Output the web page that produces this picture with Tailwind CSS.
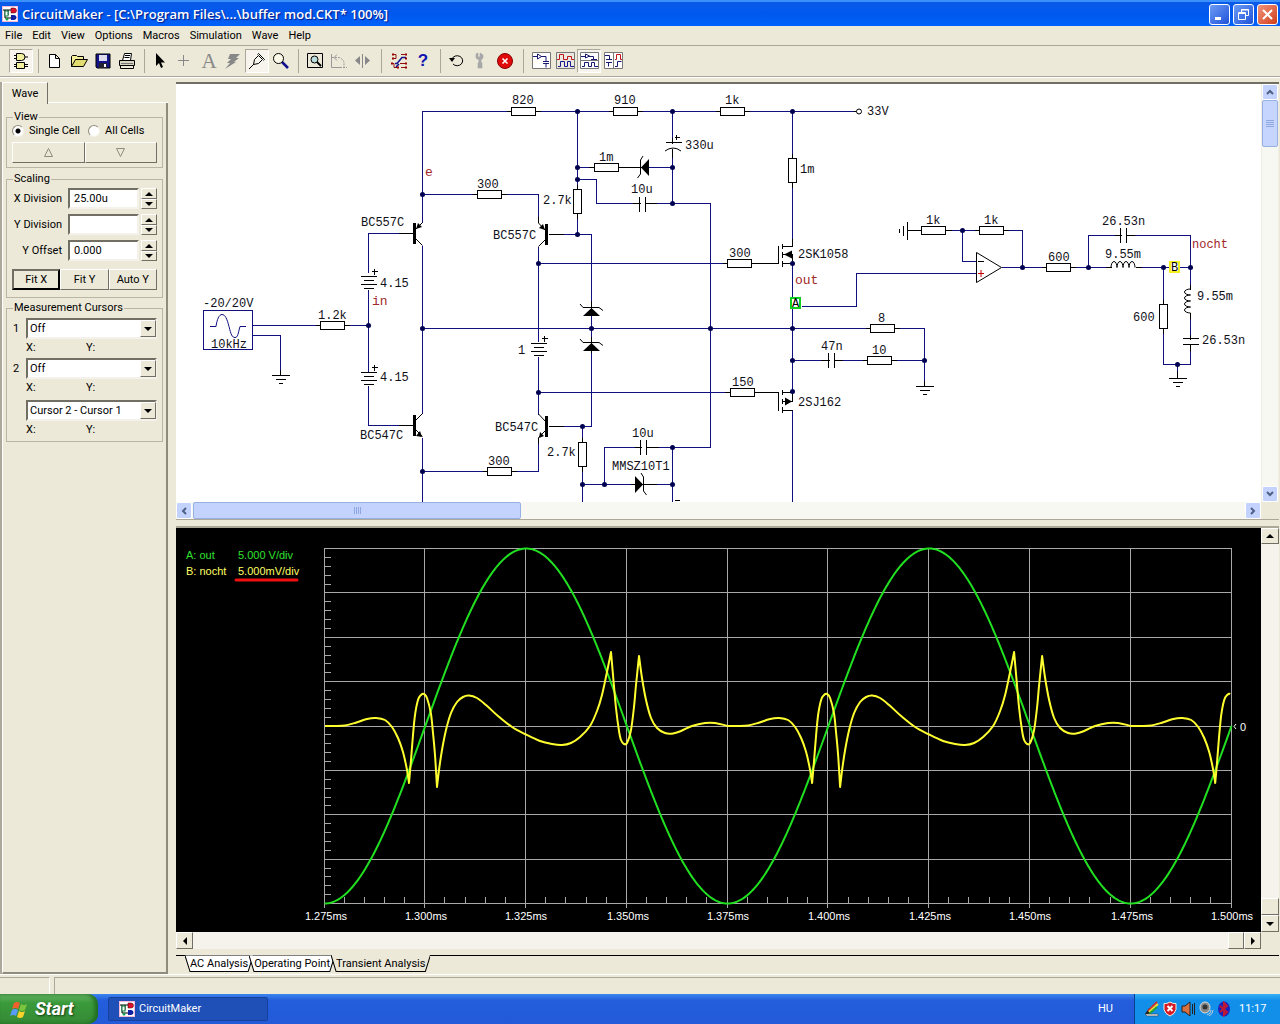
<!DOCTYPE html>
<html lang="en">

<head>
    <meta charset="UTF-8">
    <meta name="viewport" content="width=device-width,initial-scale=1.0">
    <script src="https://cdn.jsdelivr.net/npm/@tailwindcss/browser@4"></script>
    <title>CircuitMaker</title>
</head>

<body class="bg-[#ece9d8] font-[Roboto,'Liberation_Sans',sans-serif] text-[11px] leading-[14px] text-black">
    <!-- Shared symbols -->
    <svg class="hidden">
        <symbol id="app-icon" viewBox="0 0 16 16">
            <rect x=".5" y=".5" width="15" height="15" fill="#fff" stroke="#f7b8d8" />
            <path d="M1 4h9M3 4v8h7M6 4v5" fill="none" stroke="#000" />
            <rect x="3" y="5" width="3" height="5" fill="#fff" stroke="#087a3a" />
            <path d="M9 2h3a2.500 2.500 0 0 1 0 5H9z" fill="#e01030" stroke="#400" stroke-width=".5" />
            <path d="M9 9h3a2.500 2.500 0 0 1 0 5H9z" fill="#1020a0" />
            <circle cx="5" cy="13" r="1.500" fill="#18a050" />
        </symbol>
        <symbol id="up" viewBox="0 0 8 4"><path d="M4 0l4 4H0z" /></symbol>
        <symbol id="down" viewBox="0 0 8 4"><path d="M0 0h8L4 4z" /></symbol>
        <symbol id="left" viewBox="0 0 4 8"><path d="M4 0v8L0 4z" /></symbol>
        <symbol id="right" viewBox="0 0 4 8"><path d="M0 0v8l4-4z" /></symbol>
    </svg>

    <div class="flex min-h-screen flex-col">
        <!-- Title bar -->
        <header
            class="flex h-[26px] items-center bg-linear-to-b from-[#0a5ae8] via-[#0058ee] to-[#0062fb] border-t-2 border-[#3c90fb] px-[2px]">
            <svg class="size-4"><use href="#app-icon" /></svg>
            <h1
                class="ml-1 flex-1 font-['Open_Sans',sans-serif] text-[13px] font-semibold text-white [text-shadow:1px_1px_1px_#0a1883]">
                CircuitMaker - [C:\Program Files\...\buffer mod.CKT* 100%]</h1>
            <div class="flex gap-[3px]">
                <button aria-label="Minimize"
                    class="flex size-[21px] items-center justify-center rounded-[3px] border border-white bg-linear-to-br from-[#6e9bf5] to-[#1f50d8]">
                    <svg class="size-[15px]" viewBox="0 0 15 15"><path d="M3 10h6v3H3z" fill="#fff" /></svg></button>
                <button aria-label="Restore"
                    class="flex size-[21px] items-center justify-center rounded-[3px] border border-white bg-linear-to-br from-[#6e9bf5] to-[#1f50d8]">
                    <svg class="size-[15px]" viewBox="0 0 15 15" fill="none" stroke="#fff">
                        <path d="M5.500 5V2.500h7v6H10M5 3h8" /><path d="M2.500 5.500h7v7h-7zM2 6.500h8" /></svg></button>
                <button aria-label="Close"
                    class="flex size-[21px] items-center justify-center rounded-[3px] border border-white bg-linear-to-br from-[#f0937a] to-[#d03a12]">
                    <svg class="size-[15px]" viewBox="0 0 15 15"><path d="M3 3l9 9M12 3l-9 9" stroke="#fff"
                            stroke-width="2" /></svg></button>
            </div>
        </header>

        <!-- Menu -->
        <nav class="flex h-[19px] items-center gap-[10px] pl-[5px]">
            <a href="#">File</a>
            <a href="#">Edit</a>
            <a href="#">View</a>
            <a href="#">Options</a>
            <a href="#">Macros</a>
            <a href="#">Simulation</a>
            <a href="#">Wave</a>
            <a href="#">Help</a>
        </nav>

        <!-- Toolbar -->
        <div class="flex h-[32px] items-center border-t border-b border-t-[#aca899] border-b-[#aca899] pl-[9px]">
            <button aria-label="Devices"
                class="flex size-6 items-center justify-center border border-t-[#aca899] border-l-[#aca899] border-r-white border-b-white bg-[#f6f4ec]">
                <svg class="size-[18px]" viewBox="0 0 18 18" stroke="#000" fill="#f3f0a0">
                    <path d="M2 3.500h3M2 6.500h3M12 5h4M2 12.500h3M2 14.500h3M12 12.500h4M12 14.500h4" />
                    <path d="M4.500 1.500h5a3.500 3.500 0 0 1 0 7h-5zM4.500 10.500h8v6h-8z" />
                </svg></button>
            <div class="flex w-2.5 justify-center"><i class="h-6 border-l border-[#aca899]"></i></div>
            <button aria-label="New" class="flex size-6 items-center justify-center">
                <svg class="size-[18px]" viewBox="0 0 18 18"><path d="M3.500 2.500h6l4 4v9h-10zM9.500 2.500v4h4" fill="#fff"
                        stroke="#000" /></svg></button>
            <button aria-label="Open" class="flex size-6 items-center justify-center">
                <svg class="size-[18px]" viewBox="0 0 18 18" stroke="#000">
                    <path d="M1.500 14.500v-10l1-1h4l1 1h6v3" fill="#f5ef9a" />
                    <path d="M1.500 14.500l4-7h12l-4 7z" fill="#e2dc70" /></svg></button>
            <button aria-label="Save" class="flex size-6 items-center justify-center">
                <svg class="size-[18px]" viewBox="0 0 18 18">
                    <path d="M2 2h14v14H3l-1-1z" fill="#14148a" stroke="#000" />
                    <path d="M5 3h8v6H5z" fill="#dde" /><path d="M5 11h8v5H5z" fill="#223" />
                    <path d="M10 12h2v3h-2z" fill="#fff" /></svg></button>
            <button aria-label="Print" class="flex size-6 items-center justify-center">
                <svg class="size-[18px]" viewBox="0 0 18 18" stroke="#000">
                    <path d="M4.500 8.500l2-7h7l-1 7z" fill="#fff" /><path d="M7 3.500h5M6.500 5.500h5" />
                    <path d="M1.500 8.500h15v5h-15z" fill="#d8d5c4" /><path d="M2.500 13.500h13v3h-13z" fill="#ece9d8" />
                    <path d="M3 11.500h12" stroke="#777" /></svg></button>
            <div class="flex w-2.5 justify-center"><i class="h-6 border-l border-[#aca899]"></i></div>
            <button aria-label="Arrow tool" class="flex size-6 items-center justify-center">
                <svg class="size-[18px]" viewBox="0 0 18 18"><path d="M4 1v13l3-3 2 5 2-1-2-4.500h4z" /></svg></button>
            <button aria-label="Wire tool" class="flex size-6 items-center justify-center">
                <svg class="size-[18px]" viewBox="0 0 18 18"><path d="M7.500 3v11M2 8.500h11" stroke="#888" /></svg></button>
            <button aria-label="Text tool"
                class="flex size-6 items-center justify-center font-['Liberation_Serif',serif] text-[21px] text-[#888]">A</button>
            <button aria-label="Delete tool" class="flex size-6 items-center justify-center">
                <svg class="size-[18px]" viewBox="0 0 18 18"><path d="M6 2h10l-4 4h3l-5 4h2L1 17l5-6H3l4-4H4z"
                        fill="#888" /></svg></button>
            <button aria-label="Probe tool"
                class="flex size-6 items-center justify-center border border-t-[#aca899] border-l-[#aca899] border-r-white border-b-white bg-[#f6f4ec]">
                <svg class="size-[18px]" viewBox="0 0 18 18" fill="none" stroke="#000">
                    <path d="M1 17l5-5M5.500 12.500l1-5 4-4 4 4-4 4zM9.500 2.500l1-1 6 6-1 1" /></svg></button>
            <button aria-label="Zoom tool" class="flex size-6 items-center justify-center">
                <svg class="size-[18px]" viewBox="0 0 18 18"><path d="M10 10l6 6" stroke="#101090"
                        stroke-width="2.500" /><circle cx="6.500" cy="6.500" r="5" fill="#fbfae8"
                        stroke="#000" /></svg></button>
            <div class="flex w-2.5 justify-center"><i class="h-6 border-l border-[#aca899]"></i></div>
            <button aria-label="Fit view" class="flex size-6 items-center justify-center">
                <svg class="size-[18px]" viewBox="0 0 18 18" fill="none" stroke="#000">
                    <path d="M1.500 1.500h15v14h-15z" /><circle cx="8.500" cy="7.500" r="3.500" fill="#bdd" />
                    <path d="M11 10l4 4" stroke-width="2" /></svg></button>
            <button aria-label="Rotate" class="flex size-6 items-center justify-center">
                <svg class="size-[18px]" viewBox="0 0 18 18" fill="none" stroke="#999">
                    <path d="M1.500 2v13.500H10" /><path d="M10 15.500h7M2 5.500h6a6 6 0 0 1 6 6v4" stroke-dasharray="2 1" />
                    <path d="M7 2.500l-3 3 3 3" /></svg></button>
            <button aria-label="Mirror" class="flex size-6 items-center justify-center">
                <svg class="size-[18px]" viewBox="0 0 18 18" fill="#888"><path
                        d="M8 2h1v14H8zM6 4v9L1 8.500zM11 4v9l5-4.500z" /></svg></button>
            <div class="flex w-3 justify-center"><i class="h-6 border-l border-[#aca899]"></i></div>
            <button aria-label="Digital analog" class="flex size-6 items-center justify-center">
                <svg class="size-[18px]" viewBox="0 0 18 18" fill="none">
                    <path d="M3 2.500h3v4H3M1 11.500h3v4h4M11 2.500h5M10 11.500h5M11 15.500h5" stroke="#901010" />
                    <path d="M5 11.500h2l5-6h4M6 15l3-3" stroke="#101090" stroke-width="1.500" />
                    <path d="M2 1.500h2v2H2zM2 5.500h2v2H2zM1 10.500h2v2H1zM15 1.500h2v2h-2zM15 5.500h2v2h-2zM15 10.500h2v2h-2zM15 14.500h2v2h-2zM7 14.500h2v2H7z"
                        fill="#900" /></svg></button>
            <button aria-label="Help"
                class="flex size-6 items-center justify-center font-['Liberation_Sans',sans-serif] text-[17px] font-bold text-[#1414b0]">?</button>
            <div class="flex w-2.5 justify-center"><i class="h-6 border-l border-[#aca899]"></i></div>
            <button aria-label="Reset" class="flex size-6 items-center justify-center">
                <svg class="size-[18px]" viewBox="0 0 18 18" fill="none" stroke="#000">
                    <path d="M4 7a5.500 5 0 1 1 1 5" /><path d="M1 6h6l-3 4z" fill="#000" stroke="none" /></svg></button>
            <button aria-label="Setup" class="flex size-6 items-center justify-center">
                <svg class="size-[18px]" viewBox="0 0 18 18"><path
                        d="M4 2l2-1v4h2V1l3 2v3L9 8v2l1 1v5H6v-5l1-1V8L4 6z" fill="#aaa" stroke="#999"
                        stroke-width=".5" /></svg></button>
            <button aria-label="Stop" class="flex size-6 items-center justify-center">
                <svg class="size-[18px]" viewBox="0 0 18 18"><circle cx="9" cy="9" r="7.500" fill="#e00a0a"
                        stroke="#800" /><path d="M6.500 6.500l5 5M11.500 6.500l-5 5" stroke="#fff"
                        stroke-width="1.600" /></svg></button>
            <div class="flex w-3 justify-center"><i class="h-6 border-l border-[#aca899]"></i></div>
            <button aria-label="Schematic" class="flex size-6 items-center justify-center">
                <svg class="size-5" viewBox="-1 0 20 20" fill="none">
                    <path d="M.5 1.500h18v16H.5z" fill="#fff" stroke="#777" />
                    <path d="M1 5.500h4M5.500 3v5l4-2.500zM9 5.500h5v5M11 10.500h6M11 12.500h6M14 12.500v4" stroke="#1a1a70" />
                </svg></button>
            <button aria-label="Waveforms" class="flex size-6 items-center justify-center">
                <svg class="size-5" viewBox="-1 0 20 20" fill="none">
                    <path d="M.5 1.500h18v16H.5z" fill="#ece9e0" stroke="#777" />
                    <path d="M1 8.500h2.500v-5h4v5h4v-3h4v3H18" stroke="#c01818" />
                    <path d="M2 15.500h2.500v-5h4v5h3v-5h3v5H18" stroke="#1a1a90" /></svg></button>
            <button aria-label="Split horizontal"
                class="flex size-6 items-center justify-center border border-t-[#aca899] border-l-[#aca899] border-r-white border-b-white bg-[#f6f4ec]">
                <svg class="size-5" viewBox="-1 0 20 20" fill="none">
                    <path d="M.5 1.500h18v16H.5zM1 9.500h17" fill="#fff" stroke="#777" />
                    <path d="M1 5.500h4M5.500 3v4l4-2zM9 5.500h4.500v3M11 8.500h6M2 15.500h2.500v-4h4v4h3v-4h3v4H18"
                        stroke="#1a1a70" /></svg></button>
            <button aria-label="Split vertical" class="flex size-6 items-center justify-center">
                <svg class="size-5" viewBox="-1 0 20 20" fill="none">
                    <path d="M.5 1.500h18v16H.5zM9.500 2v15" fill="#fff" stroke="#777" />
                    <path d="M1 4.500h4.500v4M2 8.500h6M2 11.500h6M4.500 11.500v4M11 15.500h2.500v-5h4" stroke="#1a1a70" />
                    <path d="M11 8.500h1.500v-5h4v5H18" stroke="#c01818" /></svg></button>
        </div>

        <main class="flex flex-1 gap-2 border-t border-white pt-1 pr-px">
            <!-- Side panel -->
            <aside class="flex w-[168px] flex-col border-l-2 border-[#aca899]">
                <div class="flex">
                    <button
                        class="-mb-px h-[22px] w-[46px] border border-t-white border-r-[#716f64] border-b-0 border-l-white bg-[#ece9d8]">Wave</button>
                    <span class="flex-1 border-b border-white"></span>
                </div>
                <form class="flex-1 border-r-2 border-b-2 border-[#8f8c7d] border-l border-l-white px-[3px] pt-[7px]">
                    <fieldset class="mb-[4px] border border-[#b9b6a5] px-[5px] pb-1">
                        <legend class="ml-px px-px">View</legend>
                        <div class="flex gap-2">
                            <label class="flex items-center gap-[5px]"><input type="radio" name="cell" checked
                                    class="size-3 appearance-none rounded-full border border-[#8f8c7d] border-r-[#f4f2ea] border-b-[#f4f2ea] bg-white bg-[radial-gradient(circle,#000_2px,#fff_3px)]">Single
                                Cell</label>
                            <label class="flex items-center gap-[5px]"><input type="radio" name="cell"
                                    class="size-3 appearance-none rounded-full border border-[#8f8c7d] border-r-[#f4f2ea] border-b-[#f4f2ea] bg-white">All
                                Cells</label>
                        </div>
                        <div class="mt-1 grid grid-cols-2">
                            <button type="button" aria-label="Previous cell"
                                class="flex h-[21px] items-center justify-center border border-t-white border-r-[#716f64] border-b-[#716f64] border-l-white">
                                <svg class="size-[11px]" viewBox="0 0 11 11"><path d="M5.500 1.500l4 8h-8z" fill="none"
                                        stroke="#8f8c7d" /></svg></button>
                            <button type="button" aria-label="Next cell"
                                class="flex h-[21px] items-center justify-center border border-t-white border-r-[#716f64] border-b-[#716f64] border-l-white">
                                <svg class="size-[11px]" viewBox="0 0 11 11"><path d="M5.500 9.500l4-8h-8z" fill="none"
                                        stroke="#8f8c7d" /></svg></button>
                        </div>
                    </fieldset>

                    <fieldset class="mb-[3px] border border-[#b9b6a5] px-[5px] pb-[7px]">
                        <legend class="ml-px px-px">Scaling</legend>
                        <div class="mt-[2px] flex flex-col gap-[5px]">
                            <div class="flex items-center justify-end gap-[2px]">
                                <label for="xdiv" class="mr-1">X Division</label>
                                <input id="xdiv" value="25.00u"
                                    class="h-[21px] w-[71px] border-2 border-t-[#716f64] border-r-[#f4f2ea] border-b-[#f4f2ea] border-l-[#716f64] bg-white px-1">
                                <span class="flex w-4 flex-col">
                                    <button type="button" aria-label="X up"
                                        class="flex h-[11px] items-center justify-center border border-t-white border-r-[#716f64] border-b-[#716f64] border-l-white"><svg
                                            class="h-1 w-2"><use href="#up" /></svg></button>
                                    <button type="button" aria-label="X down"
                                        class="flex h-[10px] items-center justify-center border border-t-white border-r-[#716f64] border-b-[#716f64] border-l-white"><svg
                                            class="h-1 w-2"><use href="#down" /></svg></button>
                                </span>
                            </div>
                            <div class="flex items-center justify-end gap-[2px]">
                                <label for="ydiv" class="mr-1">Y Division</label>
                                <input id="ydiv" value=""
                                    class="h-[21px] w-[71px] border-2 border-t-[#716f64] border-r-[#f4f2ea] border-b-[#f4f2ea] border-l-[#716f64] bg-white px-1">
                                <span class="flex w-4 flex-col">
                                    <button type="button" aria-label="Y up"
                                        class="flex h-[11px] items-center justify-center border border-t-white border-r-[#716f64] border-b-[#716f64] border-l-white"><svg
                                            class="h-1 w-2"><use href="#up" /></svg></button>
                                    <button type="button" aria-label="Y down"
                                        class="flex h-[10px] items-center justify-center border border-t-white border-r-[#716f64] border-b-[#716f64] border-l-white"><svg
                                            class="h-1 w-2"><use href="#down" /></svg></button>
                                </span>
                            </div>
                            <div class="flex items-center justify-end gap-[2px]">
                                <label for="yoff" class="mr-1">Y Offset</label>
                                <input id="yoff" value="0.000"
                                    class="h-[21px] w-[71px] border-2 border-t-[#716f64] border-r-[#f4f2ea] border-b-[#f4f2ea] border-l-[#716f64] bg-white px-1">
                                <span class="flex w-4 flex-col">
                                    <button type="button" aria-label="Offset up"
                                        class="flex h-[11px] items-center justify-center border border-t-white border-r-[#716f64] border-b-[#716f64] border-l-white"><svg
                                            class="h-1 w-2"><use href="#up" /></svg></button>
                                    <button type="button" aria-label="Offset down"
                                        class="flex h-[10px] items-center justify-center border border-t-white border-r-[#716f64] border-b-[#716f64] border-l-white"><svg
                                            class="h-1 w-2"><use href="#down" /></svg></button>
                                </span>
                            </div>
                        </div>
                        <div class="mt-[8px] grid h-[21px] grid-cols-3">
                            <button type="button" class="border-2 border-black border-t-[#716f64] border-l-[#716f64]">Fit X</button>
                            <button type="button"
                                class="border border-t-white border-r-[#716f64] border-b-[#716f64] border-l-white">Fit Y</button>
                            <button type="button"
                                class="border border-t-white border-r-[#716f64] border-b-[#716f64] border-l-white">Auto Y</button>
                        </div>
                    </fieldset>

                    <fieldset class="border border-[#b9b6a5] px-[5px] pb-1">
                        <legend class="ml-px px-px">Measurement Cursors</legend>
                        <div class="mt-[3px] grid grid-cols-[14px_60px_1fr] items-center gap-y-[2px]">
                            <label for="c1" class="pl-px">1</label>
                            <div class="relative col-span-2">
                                <select id="c1"
                                    class="block h-[21px] w-full appearance-none border-2 border-t-[#716f64] border-r-[#f4f2ea] border-b-[#f4f2ea] border-l-[#716f64] bg-white px-[2px]">
                                    <option>Off</option>
                                </select>
                                <span
                                    class="pointer-events-none absolute top-[2px] right-[1px] flex h-[17px] w-4 items-center justify-center border border-t-white border-r-[#716f64] border-b-[#716f64] border-l-white bg-[#ece9d8]"><svg
                                        class="h-1 w-2"><use href="#down" /></svg></span>
                            </div>
                            <span class="col-start-2">X:</span><span>Y:</span>
                            <label for="c2" class="mt-px pl-px">2</label>
                            <div class="relative col-span-2 mt-px">
                                <select id="c2"
                                    class="block h-[21px] w-full appearance-none border-2 border-t-[#716f64] border-r-[#f4f2ea] border-b-[#f4f2ea] border-l-[#716f64] bg-white px-[2px]">
                                    <option>Off</option>
                                </select>
                                <span
                                    class="pointer-events-none absolute top-[2px] right-[1px] flex h-[17px] w-4 items-center justify-center border border-t-white border-r-[#716f64] border-b-[#716f64] border-l-white bg-[#ece9d8]"><svg
                                        class="h-1 w-2"><use href="#down" /></svg></span>
                            </div>
                            <span class="col-start-2">X:</span><span>Y:</span>
                            <div class="relative col-span-2 col-start-2 mt-[3px]">
                                <select aria-label="Cursor difference"
                                    class="block h-[21px] w-full appearance-none border-2 border-t-[#716f64] border-r-[#f4f2ea] border-b-[#f4f2ea] border-l-[#716f64] bg-white px-[2px]">
                                    <option>Cursor 2 - Cursor 1</option>
                                </select>
                                <span
                                    class="pointer-events-none absolute top-[2px] right-[1px] flex h-[17px] w-4 items-center justify-center border border-t-white border-r-[#716f64] border-b-[#716f64] border-l-white bg-[#ece9d8]"><svg
                                        class="h-1 w-2"><use href="#down" /></svg></span>
                            </div>
                            <span class="col-start-2">X:</span><span>Y:</span>
                        </div>
                    </fieldset>
                </form>
            </aside>

            <div class="flex min-w-0 flex-1 flex-col border-t-2 border-[#716f64]">
                <!-- Schematic -->
                <div class="flex">
                    <div class="min-w-0 flex-1 bg-white">
                        <svg class="block w-full" viewBox="176 84 1085 418"
                            font-family="'Liberation Mono','Courier New',monospace" font-size="12">
                            <g transform="translate(.5 .5)" fill="none" stroke="#101080" shape-rendering="crispEdges">
                                <!-- wires -->
                                <path d="M422 222V111H853M422 194H538V217M577 111V234M577 167H672M577 179H596V203H710V447H604V484M672 111V203M792 111V246" />
                                <path d="M368 272V233H398M368 289V372M368 385V425H398M252 325H368M252 335H280V372M422 245V413M422 437V502M422 471H538V441" />
                                <path d="M422 328H924V383M538 246V341M538 356V414M538 263H763M538 392H763M563 234H591V426H563M582 426V502M582 484H672M672 447V502" />
                                <path d="M792 263V391M792 410V502M801 306H856V273H976M792 360H924M910 230H1022V267M962 230V261H976M1001 267H1190M1088 267V235H1190V364H1163V267M1177 364V378" />
                                <path d="M203 310h49v39h-49z" />
                                <!-- component leads -->
                                <path stroke="#000" d="M506 111h34M608 111h34M715 111h34M472 194h34M588 167h60M577 184v34M792 153v34M632 203h24M672 137v20M398 233h15M398 425h15M315 325h34M482 471h34M548 234h15M548 426h15M582 437v34M634 447h24M630 484h26M722 263h56M724 392h54M865 328h34M820 360h22M862 360h34M907 230h44M974 230h34M1041 267h34M1114 235h20M1105 267h36M1163 299v34M1190 284v34M1190 334v16M853 111h4M280 369v6M924 380v6M1177 370v8M591 300v15M591 336v16" />
                            </g>
                            <!-- resistors -->
                            <g transform="translate(.5 .5)" fill="#fff" stroke="#000" shape-rendering="crispEdges">
                                <path d="M511 107h24v8h-24zM613 107h24v8h-24zM720 107h24v8h-24zM594 163h24v8h-24zM477 190h24v8h-24zM487 467h24v8h-24zM320 321h24v8h-24zM727 259h24v8h-24zM730 388h24v8h-24zM870 324h24v8h-24zM867 356h24v8h-24zM921 226h24v8h-24zM979 226h24v8h-24zM1046 263h24v8h-24z" />
                                <path d="M573 189h8v24h-8zM578 442h8v24h-8zM788 158h8v24h-8zM1159 304h8v24h-8z" />
                                <!-- gaps for capacitors, batteries and coils -->
                                <path stroke="none" d="M640 196h5v16h-5zM641 440h5v14h-5zM829 352h5v16h-5zM1121 227h5v16h-5zM1182 339h16v5h-16zM665 143h16v5h-16zM360 277h16v12h-16zM360 373h16v12h-16zM530 344h16v12h-16zM1111 266h24v3h-24zM1189 289h3v23h-3z" />
                            </g>
                            <g transform="translate(.5 .5)" fill="none" stroke="#000" shape-rendering="crispEdges">
                                <!-- capacitors -->
                                <path d="M639 196v15M645 196v15M640 439v15M646 439v15M828 352v15M834 352v15M1120 227v15M1126 227v15M1182 338h16M1182 344h16M665 142h16" />
                                <!-- batteries -->
                                <path d="M360 276h16M363 280h10M360 284h16M363 288h10M360 372h16M363 376h10M360 380h16M363 384h10M530 343h16M533 347h10M530 351h16M533 355h10" />
                                <path d="M371 271h6M374 268v6M371 367h6M374 364v6M541 338h6M544 335v6M674 137h5M676 134v5M674 500h5" />
                                <!-- grounds -->
                                <path d="M271 375h18M275 379h10M278 383h4M915 386h18M919 390h10M922 394h4M1168 378h18M1172 382h10M1175 386h4M907 221v18M903 225v10M899 228v4" />
                                <!-- mosfets -->
                                <path d="M778 245v18M782 243v5M782 251v6M782 260v6M782 246h10v-8M782 254h10v9h-10M778 392v18M782 389v5M782 398v5M782 406v6M782 392h10v9h-10M782 410h10" />
                            </g>
                            <g fill="none" stroke="#000">
                                <path d="M665 151q8-6 16 0" />
                                <path d="M976.500 252.500v30l25-15z" fill="#fff" />
                                <path d="M978 261.500h6" />
                                <path d="M978 273.500h6M981 270v7" stroke="#c00000" />
                                <path d="M1111 267.500a3 6 0 0 1 6 0a3 6 0 0 1 6 0a3 6 0 0 1 6 0a3 6 0 0 1 6 0" />
                                <path d="M1190.500 289a6 3 0 0 0 0 6a6 3 0 0 0 0 6a6 3 0 0 0 0 6a6 3 0 0 0 0 6" />
                                <path d="M210 326.500h6c1-7 3-12 6-12s5 4 7 12 3 11 6 11 3-4 5-11h6" stroke="#101080" />
                                <circle cx="859" cy="111.500" r="2.500" fill="#fff" />
                                <!-- transistor legs -->
                                <path d="M415 230l7.500-7.500M415 238l7.500 7.500M415 421l7.500-7.500M415 429l7.500 7.500M546 231l-7.500-8v-6M546 239l-7.500 7.500M546 422l-7.500-8M546 430l-7.500 7.500v6" />
                                <path d="M414.500 223v21M414.500 415v21M546.500 224v21M546.500 416v21" stroke-width="3" />
                                <!-- zener bars -->
                                <path d="M643 156l-2.500 4v14l-3 4M580 304l3 3.500h16l4 3M580 339l3 3.500h16l4 3M641 473l2.500 4v14l3 4" />
                            </g>
                            <!-- arrow heads -->
                            <path d="M416 229l2-6 4 4zM422 437l-6-1 4-5zM545 230l-6-2 4-4zM539 438l1-6 4 4zM649 159v17l-8-8.500zM635 476v17l8-8.500zM583 316h17l-8.500-8zM583 351h17l-8.500-8zM784 254.500l8-4v8zM792 401.500l-7-4v8z" />
                            <!-- junctions -->
                            <g fill="#000050">
                                <circle cx="422.500" cy="194.500" r="2.500" /><circle cx="422.500" cy="328.500" r="2.500" />
                                <circle cx="422.500" cy="471.500" r="2.500" /><circle cx="368.500" cy="325.500" r="2.500" />
                                <circle cx="577.500" cy="111.500" r="2.500" /><circle cx="577.500" cy="167.500" r="2.500" />
                                <circle cx="577.500" cy="179.500" r="2.500" /><circle cx="577.500" cy="234.500" r="2.500" />
                                <circle cx="672.500" cy="111.500" r="2.500" /><circle cx="672.500" cy="167.500" r="2.500" />
                                <circle cx="672.500" cy="203.500" r="2.500" /><circle cx="792.500" cy="111.500" r="2.500" />
                                <circle cx="538.500" cy="263.500" r="2.500" /><circle cx="538.500" cy="392.500" r="2.500" />
                                <circle cx="591.500" cy="328.500" r="2.500" /><circle cx="710.500" cy="328.500" r="2.500" />
                                <circle cx="792.500" cy="328.500" r="2.500" /><circle cx="792.500" cy="360.500" r="2.500" />
                                <circle cx="792.500" cy="263.500" r="2.500" /><circle cx="792.500" cy="391.500" r="2.500" />
                                <circle cx="924.500" cy="360.500" r="2.500" /><circle cx="582.500" cy="426.500" r="2.500" />
                                <circle cx="582.500" cy="484.500" r="2.500" /><circle cx="604.500" cy="484.500" r="2.500" />
                                <circle cx="672.500" cy="447.500" r="2.500" /><circle cx="672.500" cy="484.500" r="2.500" />
                                <circle cx="962.500" cy="230.500" r="2.500" /><circle cx="1022.500" cy="267.500" r="2.500" />
                                <circle cx="1088.500" cy="267.500" r="2.500" /><circle cx="1163.500" cy="267.500" r="2.500" />
                                <circle cx="1190.500" cy="267.500" r="2.500" /><circle cx="1177.500" cy="364.500" r="2.500" />
                            </g>
                            <!-- probes -->
                            <rect x="791" y="298" width="9" height="10" fill="#fff" stroke="#10d020" stroke-width="2" />
                            <text x="792" y="307">A</text>
                            <rect x="1170" y="262" width="9" height="10" fill="#fff" stroke="#f4f020" stroke-width="2" />
                            <text x="1171" y="271">B</text>
                            <!-- labels -->
                            <g fill="#101018">
                                <text x="512" y="104">820</text><text x="614" y="104">910</text>
                                <text x="725" y="104">1k</text><text x="867" y="115">33V</text>
                                <text x="685" y="149">330u</text><text x="599" y="161">1m</text>
                                <text x="631" y="193">10u</text><text x="543" y="204">2.7k</text>
                                <text x="477" y="188">300</text><text x="361" y="226">BC557C</text>
                                <text x="493" y="239">BC557C</text><text x="800" y="173">1m</text>
                                <text x="729" y="257">300</text><text x="798" y="258">2SK1058</text>
                                <text x="380" y="287">4.15</text><text x="380" y="381">4.15</text>
                                <text x="203" y="307">-20/20V</text><text x="211" y="348">10kHz</text>
                                <text x="318" y="319">1.2k</text><text x="518" y="354">1</text>
                                <text x="360" y="439">BC547C</text><text x="495" y="431">BC547C</text>
                                <text x="488" y="465">300</text><text x="547" y="456">2.7k</text>
                                <text x="632" y="437">10u</text><text x="612" y="470">MMSZ10T1</text>
                                <text x="732" y="386">150</text><text x="798" y="406">2SJ162</text>
                                <text x="878" y="322">8</text><text x="872" y="354">10</text>
                                <text x="821" y="350">47n</text><text x="926" y="224">1k</text>
                                <text x="984" y="224">1k</text><text x="1048" y="261">600</text>
                                <text x="1102" y="225">26.53n</text><text x="1105" y="258">9.55m</text>
                                <text x="1133" y="321">600</text><text x="1197" y="300">9.55m</text>
                                <text x="1202" y="344">26.53n</text>
                            </g>
                            <g fill="#a02828">
                                <text x="425" y="176" font-size="13">e</text><text x="372" y="305" font-size="13">in</text>
                                <text x="795" y="284" font-size="13">out</text><text x="1192" y="248">nocht</text>
                            </g>
                        </svg>
                    </div>
                    <div class="flex w-[18px] flex-col border-x border-[#f0eee4] bg-[#f8f8f3]">
                        <button aria-label="Scroll up"
                            class="flex h-4 items-center justify-center rounded-[2px] border border-white bg-[#c3d3fd]"><svg
                                class="h-[6px] w-2" viewBox="0 0 8 6"><path d="M1 5l3-3 3 3" fill="none" stroke="#4d6185"
                                    stroke-width="2" /></svg></button>
                        <span
                            class="flex h-[47px] flex-col items-center justify-center gap-px rounded-[2px] border border-[#98b1e4] bg-[#c6d5fd]">
                            <i class="h-px w-2 bg-[#8fa8e0]"></i><i class="h-px w-2 bg-[#8fa8e0]"></i><i
                                class="h-px w-2 bg-[#8fa8e0]"></i><i class="h-px w-2 bg-[#8fa8e0]"></i></span>
                        <button aria-label="Scroll down"
                            class="mt-auto flex h-4 items-center justify-center rounded-[2px] border border-white bg-[#c3d3fd]"><svg
                                class="h-[6px] w-2" viewBox="0 0 8 6"><path d="M1 1l3 3 3-3" fill="none" stroke="#4d6185"
                                    stroke-width="2" /></svg></button>
                    </div>
                </div>
                <div class="mr-[18px] flex h-[17px] bg-[#f8f8f3]">
                    <button aria-label="Scroll left"
                        class="flex w-4 items-center justify-center rounded-[2px] border border-white bg-[#c3d3fd]"><svg
                            class="h-2 w-[6px]" viewBox="0 0 6 8"><path d="M5 1L2 4l3 3" fill="none" stroke="#4d6185"
                                stroke-width="2" /></svg></button>
                    <span
                        class="ml-px flex w-[328px] items-center justify-center gap-px rounded-[2px] border border-[#98b1e4] bg-[#c3d3fd]">
                        <i class="h-[7px] w-px bg-[#8fa8e0]"></i><i class="h-[7px] w-px bg-[#8fa8e0]"></i><i
                            class="h-[7px] w-px bg-[#8fa8e0]"></i><i class="h-[7px] w-px bg-[#8fa8e0]"></i></span>
                    <button aria-label="Scroll right"
                        class="ml-auto flex w-4 items-center justify-center rounded-[2px] border border-white bg-[#c3d3fd]"><svg
                            class="h-2 w-[6px]" viewBox="0 0 6 8"><path d="M1 1l3 3-3 3" fill="none" stroke="#4d6185"
                                stroke-width="2" /></svg></button>
                </div>
                <div class="h-[9px] border-t border-b-2 border-t-[#aca899] border-b-[#aca899] bg-[#ece9d8]"></div>

                <!-- Waveforms -->
                <div class="flex">
                    <div class="min-w-0 flex-1 bg-black">
                        <svg class="block w-full" viewBox="176 528 1085 404" fill="none"
                            font-family="'Liberation Sans',Arial,sans-serif" font-size="11">
                            <path id="grid" stroke="#a8a8a8" shape-rendering="crispEdges" />
                            <path id="traceA" stroke="#20e020" stroke-width="2" />
                            <path id="traceB" stroke="#ffff30" stroke-width="2" stroke-linejoin="round" />
                            <g fill="#30e030"><text x="186" y="559">A: out</text><text x="238" y="559">5.000 V/div</text></g>
                            <g fill="#ffff60"><text x="186" y="575">B: nocht</text><text x="238" y="575">5.000mV/div</text></g>
                            <path d="M236 580h61" stroke="#f01010" stroke-width="3" stroke-linecap="round" />
                            <g fill="#fff" text-anchor="middle">
                                <text x="326" y="920">1.275ms</text><text x="426" y="920">1.300ms</text>
                                <text x="526" y="920">1.325ms</text><text x="628" y="920">1.350ms</text>
                                <text x="728" y="920">1.375ms</text><text x="829" y="920">1.400ms</text>
                                <text x="930" y="920">1.425ms</text><text x="1030" y="920">1.450ms</text>
                                <text x="1132" y="920">1.475ms</text><text x="1232" y="920">1.500ms</text>
                                <text x="1243" y="731">0</text>
                            </g>
                            <path d="M1236 724l-2 2.500 2 2.500" stroke="#fff" />
                        </svg>
                    </div>
                    <div class="flex w-[18px] flex-col bg-[#f5f3ec]">
                        <button aria-label="Plot up"
                            class="flex h-4 items-center justify-center border border-t-white border-r-[#716f64] border-b-[#716f64] border-l-white bg-[#ece9d8]"><svg
                                class="h-1 w-2"><use href="#up" /></svg></button>
                        <span
                            class="mt-auto h-[17px] border border-t-white border-r-[#716f64] border-b-[#716f64] border-l-white bg-[#ece9d8]"></span>
                        <button aria-label="Plot down"
                            class="flex h-[17px] items-center justify-center border border-t-white border-r-[#716f64] border-b-[#716f64] border-l-white bg-[#ece9d8]"><svg
                                class="h-1 w-2"><use href="#down" /></svg></button>
                    </div>
                </div>
                <div class="mr-[18px] flex h-[17px] bg-[#f5f3ec]">
                    <button aria-label="Plot left"
                        class="flex w-[17px] items-center justify-center border border-t-white border-r-[#716f64] border-b-[#716f64] border-l-white bg-[#ece9d8]"><svg
                            class="h-2 w-1"><use href="#left" /></svg></button>
                    <span
                        class="ml-auto w-4 border border-t-white border-r-[#716f64] border-b-[#716f64] border-l-white bg-[#ece9d8]"></span>
                    <button aria-label="Plot right"
                        class="flex w-[17px] items-center justify-center border border-t-white border-r-[#716f64] border-b-[#716f64] border-l-white bg-[#ece9d8]"><svg
                            class="h-2 w-1"><use href="#right" /></svg></button>
                </div>
                <!-- Analysis tabs -->
                <div class="h-[7px] border-b border-black"></div>
                <div class="flex h-4 pl-[9px]">
                    <button class="relative -mt-px px-[5px]">
                        <svg class="absolute inset-0 h-full w-full" viewBox="0 0 68 16" preserveAspectRatio="none"><path
                                d="M0 .5l5 15h58l5-15" fill="#fff" stroke="#000" /></svg>
                        <span class="relative">AC Analysis</span></button>
                    <button class="relative -mt-px -ml-[4px] px-[5px]">
                        <svg class="absolute inset-0 h-full w-full" viewBox="0 0 86 16" preserveAspectRatio="none"><path
                                d="M0 .5l5 15h76l5-15" fill="#fff" stroke="#000" /></svg>
                        <span class="relative">Operating Point</span></button>
                    <button class="relative -mt-px -ml-[4px] px-[5px]">
                        <svg class="absolute inset-0 h-full w-full" viewBox="0 0 98 16" preserveAspectRatio="none"><path
                                d="M0 0l5 15.500h88l5-15.500" fill="#ece9d8" stroke="#000" /></svg>
                        <span class="relative">Transient Analysis</span></button>
                </div>
            </div>
        </main>

        <!-- Status bar -->
        <div class="flex h-5 gap-1 border-t border-white pt-[2px]">
            <div class="w-[50px] border-t border-r border-t-[#aca899] border-r-white"></div>
            <div class="flex-1 border-t border-l border-[#aca899]"></div>
        </div>

        <!-- Taskbar -->
        <footer
            class="flex h-[30px] items-center bg-linear-to-b from-[#3c86f0] via-[#245edc] via-20% to-[#225ad8] text-white">
            <button
                class="flex h-[30px] w-[98px] items-center gap-[6px] rounded-r-[10px] bg-linear-to-b from-[#66b366] via-[#3a9a3a] via-30% to-[#358a35] pl-[10px] shadow-[inset_-3px_0_4px_#1e6a1e]">
                <svg class="size-[19px]" viewBox="0 0 19 19">
                    <path d="M4 3q3-2 6 0L8 9Q5 7 2 9z" fill="#f0602c" /><path d="M11 4q3 2 6 0l-2 6q-3 2-6 0z"
                        fill="#7cc43c" /><path d="M2 10q3-2 6 0l-2 6Q3 14 0 16z" fill="#5a9af8" /><path
                        d="M9 11q3 2 6 0l-2 6q-3 2-6 0z" fill="#fbd22c" /></svg>
                <span class="text-[18px] font-bold italic [text-shadow:1px_1px_2px_#153a15]">Start</span>
            </button>
            <button
                class="ml-[10px] flex h-6 w-40 items-center gap-1 rounded-[2px] border border-[#17409c] bg-[#1e50b8] pl-[10px]">
                <svg class="size-4"><use href="#app-icon" /></svg>CircuitMaker</button>
            <span class="ml-auto mr-[21px]">HU</span>
            <div
                class="flex h-[30px] w-[146px] items-center gap-[2px] border-l border-[#0a3f90] bg-linear-to-b from-[#35b0f5] via-[#1290e9] via-20% to-[#1290e9] pl-[9px]">
                <svg class="size-4" viewBox="0 0 16 16"><path d="M1 13l4-6 3 2-3 5z" fill="#222" /><path
                        d="M4 10l9-9" stroke="#d03030" stroke-width="2" /><path d="M5 11l9-8" stroke="#f0e030"
                        stroke-width="2" /><path d="M5 13l8-7" stroke="#20a040" stroke-width="2" /><path
                        d="M1 13h13v2H3z" fill="#ddd" stroke="#333" stroke-width=".5" /></svg>
                <svg class="size-4" viewBox="0 0 16 16"><path d="M8 1q3 2 6 1.500v6Q13 13 8 15 3 13 2 8.500v-6Q5 3 8 1z"
                        fill="#d81824" stroke="#eed" /><path d="M5.500 5l5 5M10.500 5l-5 5" stroke="#fff"
                        stroke-width="2" /></svg>
                <svg class="size-4" viewBox="0 0 16 16"><path d="M2 5h3l5-4v14l-5-4H2z" fill="#d87040" stroke="#222" /><path
                        d="M12.500 3v10M14.500 2v12" stroke="#222" /></svg>
                <svg class="size-4" viewBox="0 0 16 16"><ellipse cx="7" cy="6.500" rx="5" ry="5.500" fill="#888"
                        stroke="#ddd" /><circle cx="7" cy="6" r="2.500" fill="#333" /><path
                        d="M9 14q4-1 4-5M11 15q4-2 4-6" fill="none" stroke="#bcd" /></svg>
                <svg class="size-4" viewBox="0 0 16 16"><ellipse cx="8" cy="8" rx="6" ry="7.500" fill="#1a22c0" /><path
                        d="M4 5l7 6-3 3V2l3 3-7 6" fill="none" stroke="#c01830" stroke-width="2" /></svg>
                <span class="ml-[5px]">11:17</span>
            </div>
        </footer>
    </div>

    <script>
        const left = 324.5, right = 1231.5, top0 = 549, bottom = 904;
        const period = (right - left) * 4 / 9;

        // grid with ticks, five per division
        let d = "";
        for (let i = 0; i <= 45; i++) {
            const x = Math.round(left + (right - left) * i / 45) - 0.5;
            d += i % 5 ? `M${x} 897V903` : `M${x} 548V908`;
        }
        for (let i = 0; i <= 40; i++) {
            const y = Math.round(top0 + (bottom - top0) * i / 40) - 0.5;
            d += i % 5 ? `M${left} ${y}h6` : `M${left} ${y}H${right}`;
        }
        document.getElementById("grid").setAttribute("d", d);

        // sine at the amplifier output
        d = "";
        for (let x = left; x <= right; x += 1) {
            const y = 726 + 177.5 * Math.cos(2 * Math.PI * (x - left) / period);
            d += (d ? "L" : "M") + x + " " + y.toFixed(2);
        }
        document.getElementById("traceA").setAttribute("d", d);

        // residual after the notch filter, one run per smooth part of the period
        const runs = [
            [[325, 726], [335, 726], [345, 725.5], [355, 723], [367, 719], [376, 718], [385, 720], [392, 727], [398, 738], [403, 752], [407, 770], [409, 783]],
            [[409, 783], [411, 760], [413, 735], [415, 715], [418, 700], [421, 695], [424, 694], [427, 698], [431, 714], [433, 733], [435, 755], [437, 787]],
            [[437, 787], [439, 770], [442, 750], [446, 730], [451, 713], [457, 702], [463, 697], [469, 695.5], [477, 698], [486, 705], [498, 716], [512, 727], [525, 734], [540, 741], [552, 744], [562, 745], [571, 743], [580, 737], [590, 726], [597, 711], [602, 695], [607, 672], [611, 652]],
            [[611, 652], [613, 675], [616, 708], [619, 731], [621, 740], [624, 744], [627, 743], [631, 730], [634, 707], [636, 685], [639, 656]],
            [[639, 656], [642, 678], [646, 700], [651, 718], [657, 728], [665, 733], [673, 733.5], [681, 731], [692, 726], [705, 723], [715, 723], [728, 726]]
        ];
        d = "";
        for (let n = 0; n < 3; n++) {
            for (const run of runs) {
                const p = run.map(([x, y]) => [x + n * period, y]);
                for (let i = 0; i < p.length - 1 && p[i + 1][0] <= right + 1; i++) {
                    const a = p[i - 1] || p[i], b = p[i], c = p[i + 1], e = p[i + 2] || c;
                    const h = (c[0] - b[0]) / 3;
                    const m1 = (c[1] - a[1]) / (c[0] - a[0]), m2 = (e[1] - b[1]) / (e[0] - b[0]);
                    if (!d) d = `M${b[0]} ${b[1]}`;
                    d += `C${b[0] + h} ${b[1] + m1 * h} ${c[0] - h} ${c[1] - m2 * h} ${c[0]} ${c[1]}`;
                }
            }
        }
        document.getElementById("traceB").setAttribute("d", d);
    </script>
</body>

</html>
